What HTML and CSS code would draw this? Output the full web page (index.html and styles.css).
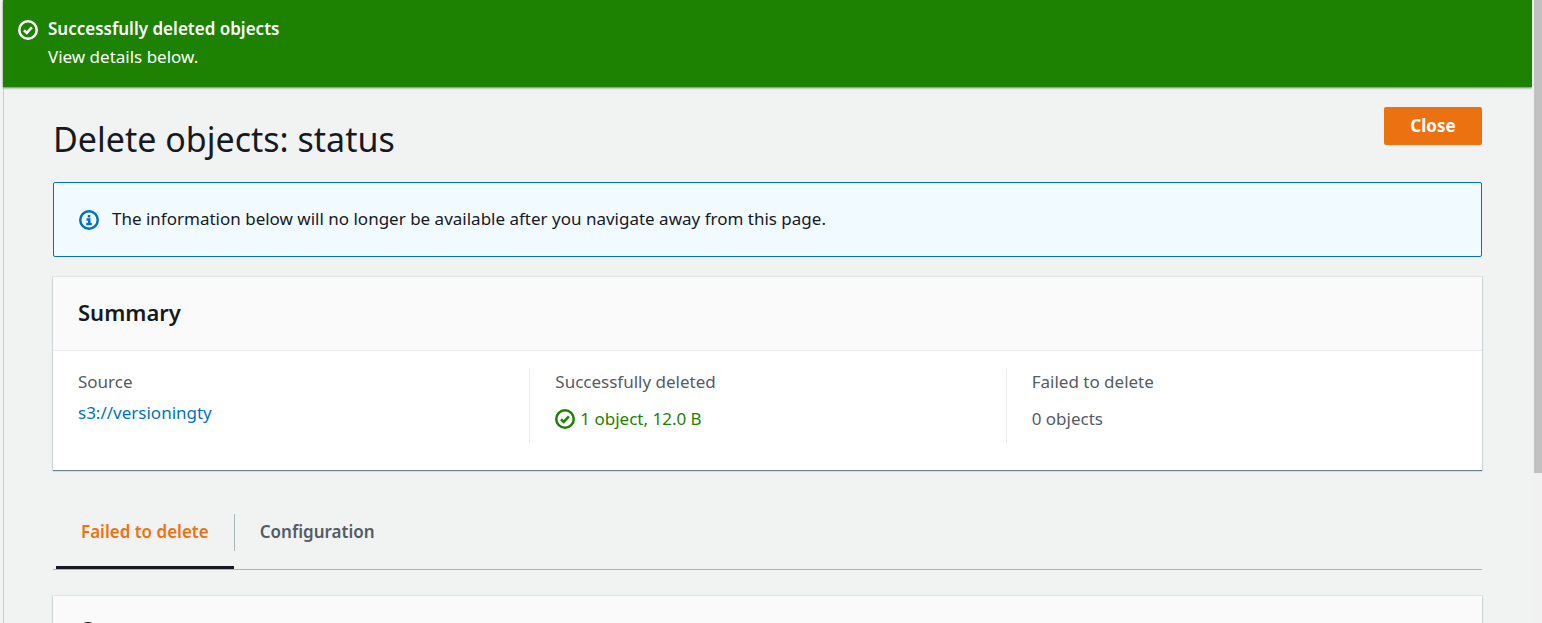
FILE: index.html
```html
<!DOCTYPE html>
<html lang="en">
<head>
<meta charset="utf-8">
<title>Delete objects: status</title>
<link rel="stylesheet" href="styles.css">
</head>
<body>
<div class="page">
  <div class="app">
    <div class="flash" role="status">
      <svg class="icon" viewBox="0 0 16 16" aria-hidden="true"><circle cx="8" cy="8" r="7"/><path d="M4.8 8.2 7 10.3l4.1-4.4"/></svg>
      <div>
        <strong class="flash-title">Successfully deleted objects</strong>
        <p class="flash-text">View details below.</p>
      </div>
    </div>
    <main class="content">
      <header class="heading">
        <h1 class="title">Delete objects: status</h1>
        <button class="close" type="button">Close</button>
      </header>
      <div class="info">
        <svg class="icon" viewBox="0 0 16 16" aria-hidden="true"><circle cx="8" cy="8" r="7"/><path d="M7 4.9h2M6 7.6h2.2v3.6M5.8 11.2h4.4"/></svg>
        <p>The information below will no longer be available after you navigate away from this page.</p>
      </div>
      <section class="card">
        <h2 class="card-title">Summary</h2>
        <dl class="columns">
          <div class="column">
            <dt>Source</dt>
            <dd class="source"><a class="link" href="#">s3://versioningty</a></dd>
          </div>
          <div class="column">
            <dt>Successfully deleted</dt>
            <dd class="success"><svg class="icon" viewBox="0 0 16 16" aria-hidden="true"><circle cx="8" cy="8" r="7"/><path d="M4.8 8.2 7 10.3l4.1-4.4"/></svg>1 object, 12.0 B</dd>
          </div>
          <div class="column">
            <dt>Failed to delete</dt>
            <dd>0 objects</dd>
          </div>
        </dl>
      </section>
      <div class="tabs" role="tablist">
        <button class="tab tab-active" type="button" role="tab" aria-selected="true">Failed to delete</button>
        <button class="tab" type="button" role="tab" aria-selected="false">Configuration</button>
      </div>
      <section class="card card-next">
        <h2 class="card-title"><svg class="icon" viewBox="0 0 16 16" aria-hidden="true"><circle cx="8" cy="8" r="7"/><path d="m5.5 5.5 5 5m0-5-5 5"/></svg><span>Failed to delete <span class="count">(0)</span></span></h2>
      </section>
    </main>
  </div>
  <div class="scrollbar" aria-hidden="true"><div class="thumb"></div></div>
</div>
</body>
</html>
```
FILE: styles.css
```css
* { box-sizing: border-box; }
body, h1, h2, p, dl, dd { margin: 0; }
body {
  background: #f1f3f3;
  color: #16191f;
  font: 17px/28px "Noto Sans", "Open Sans", sans-serif;
}
button { font: inherit; border: 0; cursor: pointer; }
.page { display: flex; height: 100vh; overflow: hidden; }
.app { flex: 1; margin-left: 3px; border-left: 1px solid #c8cdcd; }
.icon {
  flex: none;
  width: 20px;
  height: 20px;
  fill: none;
  stroke: currentColor;
  stroke-width: 2;
}
.flash {
  display: flex;
  gap: 10px;
  margin-left: -1px;
  padding: 15px 15px 16px;
  background: #1d8102;
  color: #fff;
  box-shadow: 0 1px 2px #6a7a72;
}
.flash .icon { margin-top: 5px; }
.flash-title { display: block; font-weight: 600; }
.content { padding: 20px 50px 0 49px; }
.heading { display: flex; justify-content: space-between; align-items: flex-start; }
.title { margin: 8px 0 19px; font-size: 34px; line-height: 48px; font-weight: 400; }
.close {
  width: 98px;
  height: 38px;
  border-radius: 2px;
  background: #ec7211;
  color: #fff;
  font-weight: 700;
}
.info {
  display: flex;
  align-items: center;
  gap: 13px;
  min-height: 75px;
  padding: 0 25px 2px;
  border: 1px solid #0073bb;
  border-radius: 2px;
  background: #f1faff;
}
.info .icon { color: #0073bb; margin-top: 2px; }
.card {
  margin-top: 20px;
  background: #fff;
  box-shadow: 0 1px 1px #6f8086, 0 0 1px 1px #dfe4e4;
}
.card-title {
  display: flex;
  align-items: center;
  gap: 7px;
  padding: 19px 25px 21px;
  border-bottom: 1px solid #eaeded;
  background: #fafafa;
  font-size: 22px;
  line-height: 33px;
  font-weight: 600;
}
.count { color: #687078; font-weight: 400; }
.columns { display: grid; grid-template-columns: repeat(3, 1fr); padding: 18px 0 25px; }
.column { min-height: 76px; padding: 0 25px; color: #545b64; }
.column + .column { border-left: 1px solid #eaeded; }
.column dt { line-height: 25px; }
.column dd { display: flex; align-items: center; gap: 5px; margin-top: 11px; line-height: 28px; }
.column .source { margin-top: 5px; }
.column .success { color: #1d8102; }
.link { color: #0073bb; text-decoration: none; }
.tabs { display: flex; margin-top: 40px; padding-left: 3px; border-bottom: 1px solid #aab7b8; }
.tab {
  position: relative;
  height: 59px;
  padding: 0 26px 16px;
  background: none;
  color: #545b64;
  font-weight: 600;
}
.tab-active { padding: 0 25px 13px; border-bottom: 3px solid #16191f; color: #ec7211; }
.tab-active::after {
  content: "";
  position: absolute;
  top: 4px;
  right: -1px;
  width: 1px;
  height: 37px;
  background: #aab7b8;
}
.card-next { margin-top: 26px; }
.scrollbar { width: 10px; background: #f1f1f1; padding-left: 2px; }
.thumb { height: 76%; background: #c1c1c1; }
```
